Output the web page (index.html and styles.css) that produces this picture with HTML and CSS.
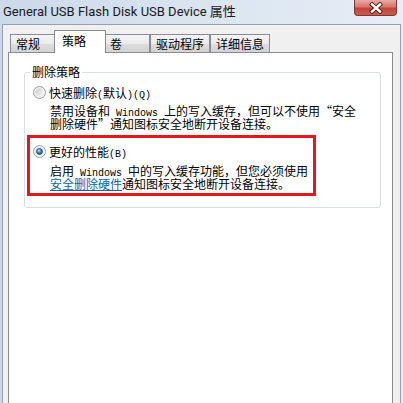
FILE: index.html
```html
<!DOCTYPE html>
<html lang="zh-CN">
<head>
    <meta charset="UTF-8">
    <title>General USB Flash Disk USB Device 属性</title>
    <link rel="stylesheet" href="styles.css">
</head>
<body>
    <div class="window">
        <div class="titlebar">
            <span class="caption">General USB Flash Disk USB Device 属性</span>
            <div class="close">
                <svg width="18" height="12" viewBox="0 0 18 12">
                    <path d="M5 2.5 L13 9.5 M13 2.5 L5 9.5" stroke="#4a1612" stroke-width="4.2" stroke-linecap="square" fill="none"/>
                    <path d="M5 2.5 L13 9.5 M13 2.5 L5 9.5" stroke="#ffffff" stroke-width="2.4" stroke-linecap="square" fill="none"/>
                </svg>
            </div>
        </div>
        <div class="client">
            <div class="tabs">
                <div class="tab">常规</div>
                <div class="tab active">策略</div>
                <div class="tab">卷</div>
                <div class="tab">驱动程序</div>
                <div class="tab">详细信息</div>
            </div>
            <div class="panel">
                <fieldset class="group">
                    <legend>删除策略</legend>

                    <!-- 快速删除 -->
                    <div class="option">
                        <div class="radio-row">
                            <svg class="radio" width="13" height="13" viewBox="0 0 13 13">
                                <defs>
                                    <linearGradient id="ring1" x1="0" y1="0" x2="1" y2="1">
                                        <stop offset="0" stop-color="#cdcdcd"/>
                                        <stop offset="1" stop-color="#fafafa"/>
                                    </linearGradient>
                                </defs>
                                <circle cx="6.5" cy="6.5" r="6" fill="#f4f4f4" stroke="#9c9c9c"/>
                                <circle cx="6.5" cy="6.5" r="4.3" fill="url(#ring1)"/>
                            </svg>
                            <span>快速删除<span class="asc">(</span>默认<span class="asc">)(Q)</span></span>
                        </div>
                        <div class="desc">禁用设备和<span class="asc"> Windows </span>上的写入缓存，但可以不使用“安全<br>删除硬件”通知图标安全地断开设备连接。</div>
                    </div>

                    <!-- 更好的性能 -->
                    <div class="option highlight">
                        <div class="radio-row">
                            <svg class="radio" width="13" height="13" viewBox="0 0 13 13">
                                <defs>
                                    <linearGradient id="ring2" x1="0" y1="0" x2="1" y2="1">
                                        <stop offset="0" stop-color="#cdcdcd"/>
                                        <stop offset="1" stop-color="#fafafa"/>
                                    </linearGradient>
                                    <radialGradient id="dot2" cx="0.4" cy="0.35" r="0.7">
                                        <stop offset="0" stop-color="#c4e6fb"/>
                                        <stop offset="0.45" stop-color="#3b8ed0"/>
                                        <stop offset="1" stop-color="#0d4680"/>
                                    </radialGradient>
                                </defs>
                                <circle cx="6.5" cy="6.5" r="6" fill="#f4f4f4" stroke="#9c9c9c"/>
                                <circle cx="6.5" cy="6.5" r="4.3" fill="url(#ring2)"/>
                                <circle cx="6.5" cy="6.5" r="3" fill="url(#dot2)" stroke="#1c3f63" stroke-width="0.6"/>
                            </svg>
                            <span>更好的性能<span class="asc">(B)</span></span>
                        </div>
                        <div class="desc">启用<span class="asc"> Windows </span>中的写入缓存功能，但您必须使用<br><a class="link" href="#">安全删除硬件</a>通知图标安全地断开设备连接。</div>
                    </div>
                </fieldset>
            </div>
        </div>
    </div>
</body>
</html>
```

FILE: styles.css
```css
html, body {
    margin: 0;
    padding: 0;
}
body {
    width: 403px;
    height: 403px;
    overflow: hidden;
    font-family: "Noto Sans CJK SC", sans-serif;
    font-size: 12px;
    color: #000;
}
.window {
    width: 403px;
    height: 403px;
    display: flex;
    flex-direction: column;
    overflow: hidden;
    background: linear-gradient(90deg, #cbd9e8 0%, #d9e4ef 45%, #e6eef6 100%);
}
.titlebar {
    height: 24px;
    display: flex;
    justify-content: space-between;
    align-items: flex-start;
}
.caption {
    padding: 3px 0 0 3px;
    line-height: 17px;
    font-family: Roboto, "Noto Sans CJK SC", sans-serif;
    font-size: 13px;
    color: #1a1a1a;
}
.close {
    width: 43px;
    height: 16px;
    margin-right: 6px;
    box-sizing: border-box;
    border: 1px solid #7a3a34;
    border-top: none;
    border-radius: 0 0 4px 4px;
    background: linear-gradient(#e9aaa2 0%, #d8776d 45%, #c2443a 55%, #cf5b4f 100%);
    display: flex;
    justify-content: center;
    align-items: center;
}
.client {
    flex: 1;
    margin: 0 2px;
    border: 1px solid #8fa2b8;
    border-bottom: none;
    background: #f0f0f0;
    overflow: hidden;
}
.tabs {
    height: 27px;
    padding-left: 7px;
    display: flex;
    align-items: flex-end;
}
.tab {
    height: 18px;
    min-width: 46px;
    box-sizing: border-box;
    padding: 0 5px;
    border: 1px solid #898c95;
    border-bottom: none;
    background: linear-gradient(#f4f4f4 0%, #ebebeb 50%, #dedede 50%, #d2d2d2 100%);
    line-height: 17px;
}
.tab.active {
    position: relative;
    z-index: 1;
    height: 23px;
    min-width: 52px;
    margin: 0 -2px -1px -2px;
    padding: 0 7px;
    background: #fff;
    line-height: 20px;
}
.panel {
    height: 360px;
    margin: 0 7px 0 5px;
    border: 1px solid #898c95;
    background: #fff;
}
.group {
    width: 357px;
    box-sizing: border-box;
    margin: 13px 0 0 15px;
    padding: 8px 10px 11px 8px;
    border: 1px solid #d5dfe5;
    border-radius: 3px;
}
.group legend {
    margin-left: -3px;
    padding: 0 2px;
    line-height: 12px;
}
.radio-row {
    display: flex;
    align-items: center;
    gap: 3px;
    height: 13px;
    line-height: 13px;
    white-space: nowrap;
}
.radio {
    flex: none;
    display: block;
}
.desc {
    margin: 5px 0 0 17px;
    line-height: 13px;
    white-space: nowrap;
}
.asc {
    font-family: "Liberation Mono", monospace;
    font-size: 10px;
    line-height: 0;
}
.highlight {
    width: 289px;
    box-sizing: border-box;
    margin: 5px 0 0 -6px;
    padding: 7px 0 3px 3px;
    border: 3px solid #e5171c;
}
.highlight .desc {
    margin-top: 6px;
}
.link {
    color: #0a64b4;
    text-decoration: underline;
}
```
